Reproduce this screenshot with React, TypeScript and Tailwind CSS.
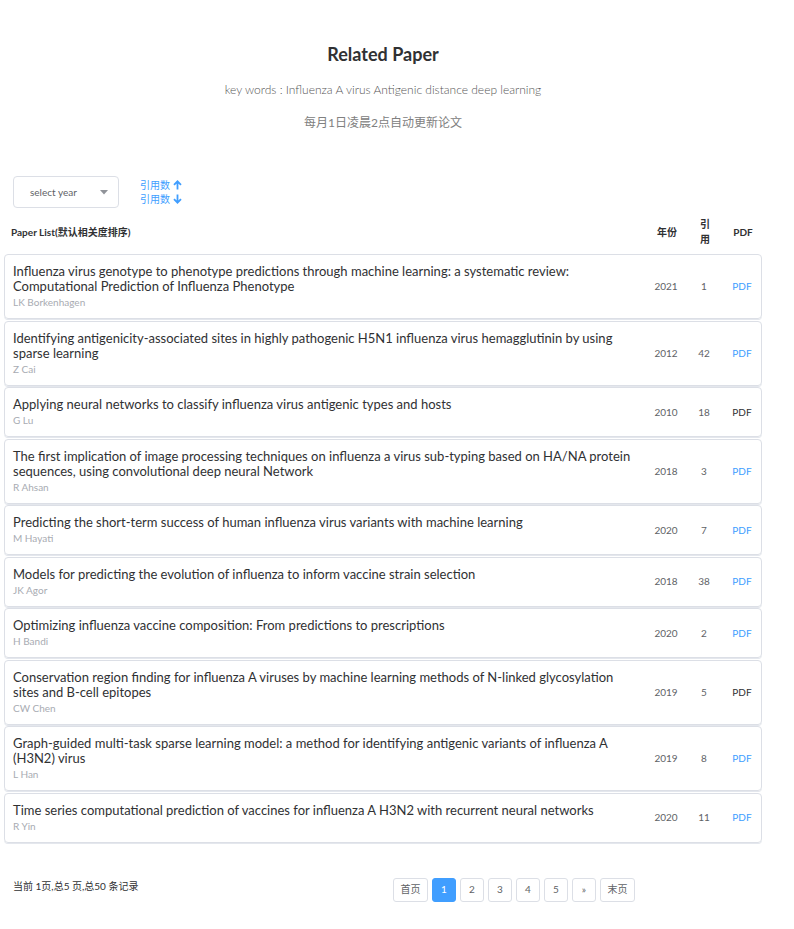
import React from "react";

const papers = [
  { t: "Influenza virus genotype to phenotype predictions through machine learning: a systematic review: Computational Prediction of Influenza Phenotype", a: "LK Borkenhagen", y: "2021", c: "1", link: true },
  { t: "Identifying antigenicity-associated sites in highly pathogenic H5N1 influenza virus hemagglutinin by using sparse learning", a: "Z Cai", y: "2012", c: "42", link: true },
  { t: "Applying neural networks to classify influenza virus antigenic types and hosts", a: "G Lu", y: "2010", c: "18", link: false },
  { t: "The first implication of image processing techniques on influenza a virus sub-typing based on HA/NA protein sequences, using convolutional deep neural Network", a: "R Ahsan", y: "2018", c: "3", link: true },
  { t: "Predicting the short-term success of human influenza virus variants with machine learning", a: "M Hayati", y: "2020", c: "7", link: true },
  { t: "Models for predicting the evolution of influenza to inform vaccine strain selection", a: "JK Agor", y: "2018", c: "38", link: true },
  { t: "Optimizing influenza vaccine composition: From predictions to prescriptions", a: "H Bandi", y: "2020", c: "2", link: true },
  { t: "Conservation region finding for influenza A viruses by machine learning methods of N-linked glycosylation sites and B-cell epitopes", a: "CW Chen", y: "2019", c: "5", link: false },
  { t: "Graph-guided multi-task sparse learning model: a method for identifying antigenic variants of influenza A (H3N2) virus", a: "L Han", y: "2019", c: "8", link: true },
  { t: "Time series computational prediction of vaccines for influenza A H3N2 with recurrent neural networks", a: "R Yin", y: "2020", c: "11", link: true },
];

const font = { fontFamily: "Lato, 'Noto Sans CJK SC', sans-serif" };

export default function App() {
  return (
    <div className="w-[794px] min-h-[929px] bg-white text-[#303133]" style={font}>
      <div className="w-[758px] ml-[4px] pt-[42px]">
        <h1 className="text-center text-[18px] font-bold leading-[24px] text-[#303133]">Related Paper</h1>
        <p className="text-center text-[12px] leading-[16px] text-[#555] mt-[16px] font-light">key words : Influenza A virus Antigenic distance deep learning</p>
        <p className="text-center text-[12px] leading-[16px] text-[#808080] mt-[17px]">每月1日凌晨2点自动更新论文</p>

        <div className="flex items-center mt-[45px] ml-[9px]">
          <div className="w-[106px] h-[32px] border border-[#dcdfe6] rounded-[4px] flex items-center justify-between pl-[16px] pr-[10px]">
            <span className="text-[10px] text-[#606266]">select year</span>
            <svg width="8" height="5" viewBox="0 0 8 5"><path d="M0 0h8L4 4.5z" fill="#909399" /></svg>
          </div>
          <div className="ml-[21px] flex flex-col text-[10px] leading-[14px] text-[#409eff]">
            <span className="flex items-center gap-[3px]">引用数
              <svg width="9" height="10" viewBox="0 0 9 10"><path d="M4.5 9.5V1.5M1 4.8L4.5 1.3 8 4.8" stroke="#409eff" strokeWidth="1.8" fill="none" /></svg>
            </span>
            <span className="flex items-center gap-[3px]">引用数
              <svg width="9" height="10" viewBox="0 0 9 10"><path d="M4.5 0.5V8.5M1 5.2L4.5 8.7 8 5.2" stroke="#409eff" strokeWidth="1.8" fill="none" /></svg>
            </span>
          </div>
        </div>

        <div className="flex items-center mt-[7px] h-[34px] text-[10px] font-bold text-[#303133]">
          <div className="flex-1 pl-[7px]">Paper List(默认相关度排序)</div>
          <div className="w-[38px] text-center">年份</div>
          <div className="w-[38px] text-center leading-[15px]">引<br />用</div>
          <div className="w-[38px] text-center">PDF</div>
        </div>

        <div className="mt-[5px] flex flex-col gap-[1.5px]">
          {papers.map((p, i) => (
            <div key={i} className="flex items-center border border-[#dcdfe6] rounded-[4px] shadow-[0_1px_0_#e4e7ed] py-[9px]">
              <div className="flex-1 pl-[8px] pr-[10px]">
                <div className="text-[13px] leading-[15px] text-[#303133]">{p.t}</div>
                <div className="text-[10px] leading-[14px] text-[#a8abb2] mt-[1px]">{p.a}</div>
              </div>
              <div className="w-[38px] text-center text-[10px] text-[#606266]">{p.y}</div>
              <div className="w-[38px] text-center text-[10px] text-[#606266]">{p.c}</div>
              <div className={"w-[38px] text-center text-[10px] " + (p.link ? "text-[#409eff]" : "text-[#303133]")}>PDF</div>
            </div>
          ))}
        </div>

        <div className="flex items-start mt-[35px] pl-[9px]">
          <div className="w-[380px] text-[10px] leading-[14px] mt-[1px] text-[#303133]">当前 1页,总5 页,总50 条记录</div>
          <div className="flex gap-[4px]">
            {["首页", "1", "2", "3", "4", "5", "»", "末页"].map((b, i) => (
              <div
                key={i}
                className={
                  "h-[24px] flex items-center justify-center rounded-[3px] text-[10px] " +
                  (b.length > 1 ? "w-[35px] " : "w-[24px] ") +
                  (b === "1" ? "bg-[#409eff] text-white border border-[#409eff]" : "border border-[#dcdfe6] text-[#606266] bg-white")
                }
              >
                {b}
              </div>
            ))}
          </div>
        </div>
      </div>
    </div>
  );
}
